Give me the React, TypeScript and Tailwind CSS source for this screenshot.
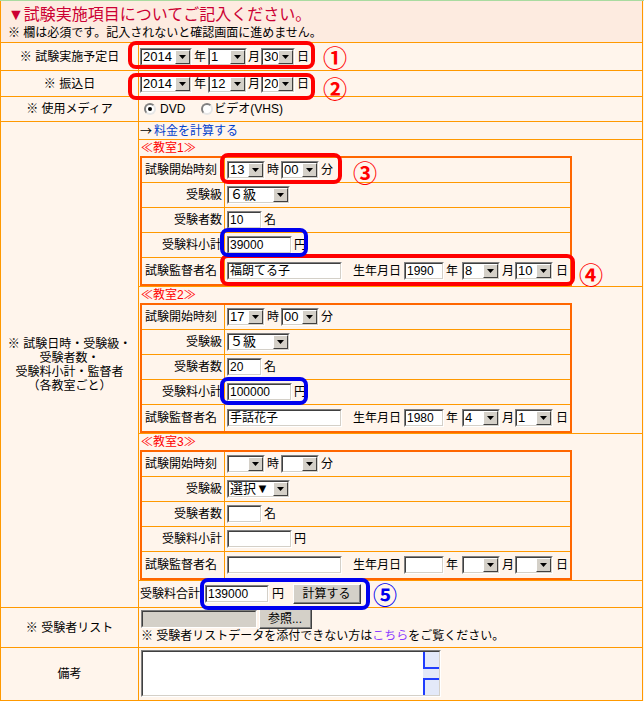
import type { ReactNode } from 'react';

type Room = {
  title: string;
  h: string;
  m: string;
  grade: string;
  num: string;
  fee: string;
  name: string;
  y: string;
  mo: string;
  d: string;
};

const ROOMS: Room[] = [
  { title: '≪教室1≫', h: '13', m: '00', grade: '６級', num: '10', fee: '39000', name: '福朗てる子', y: '1990', mo: '8', d: '10' },
  { title: '≪教室2≫', h: '17', m: '00', grade: '５級', num: '20', fee: '100000', name: '手話花子', y: '1980', mo: '4', d: '1' },
  { title: '≪教室3≫', h: '', m: '', grade: '選択▼', num: '', fee: '', name: '', y: '', mo: '', d: '' },
];

// classic win2k style select
function Sel({ w, v }: { w: string; v?: string }) {
  return (
    <span className={`flex h-[18px] shrink-0 border border-t-[#808080] border-l-[#808080] border-r-white border-b-white ${w}`}>
      <span className="flex min-w-0 flex-1 border border-t-[#404040] border-l-[#404040] border-r-[#d4d0c8] border-b-[#d4d0c8] bg-white">
        <span className="min-w-0 flex-1 overflow-hidden whitespace-nowrap pl-[1px] text-[13px] leading-[14px]">{v}</span>
        <span className="flex w-[15px] shrink-0 items-center justify-center border border-t-white border-l-white border-r-[#404040] border-b-[#404040] bg-[#d4d0c8]">
          <svg width="7" height="4" viewBox="0 0 7 4">
            <path d="M0 0h7L3.5 4z" fill="#000" />
          </svg>
        </span>
      </span>
    </span>
  );
}

function Inp({ w, v, gray }: { w: string; v?: string; gray?: boolean }) {
  return (
    <span className={`flex h-[18px] shrink-0 border border-t-[#808080] border-l-[#808080] border-r-white border-b-white ${w}`}>
      <span
        className={`flex min-w-0 flex-1 items-center overflow-hidden whitespace-nowrap border border-t-[#404040] border-l-[#404040] border-r-[#d4d0c8] border-b-[#d4d0c8] pl-[1px] text-[12px] leading-[14px] ${gray ? 'bg-[#d4d0c8]' : 'bg-white'}`}
      >
        {v}
      </span>
    </span>
  );
}

function Btn({ w, children }: { w: string; children: ReactNode }) {
  return (
    <span className={`flex h-[20px] shrink-0 border border-t-white border-l-white border-r-[#404040] border-b-[#404040] bg-[#d4d0c8] ${w}`}>
      <span className="flex flex-1 items-center justify-center border-r border-b border-[#808080] text-[12px]">{children}</span>
    </span>
  );
}

function Radio({ on }: { on?: boolean }) {
  return (
    <span className="flex h-[12px] w-[12px] shrink-0 items-center justify-center rounded-full border-2 border-t-[#808080] border-l-[#808080] border-r-[#e6e6e6] border-b-[#e6e6e6] bg-white">
      {on && <span className="h-[4px] w-[4px] rounded-full bg-black" />}
    </span>
  );
}

function Row({ h, label, children, right = 'items-center' }: { h: string; label: ReactNode; children: ReactNode; right?: string }) {
  return (
    <div className={`flex border-b border-[#ff9900] ${h}`}>
      <div className="flex w-[138px] shrink-0 items-center justify-center border-r border-[#ff9900] text-center">{label}</div>
      <div className={`flex min-w-0 flex-1 ${right}`}>{children}</div>
    </div>
  );
}

function RoomBlock({ r }: { r: Room }) {
  const row = 'flex h-[25px] border-b border-[#ff9900]';
  const lab = 'flex w-[83px] shrink-0 items-center justify-end whitespace-nowrap border-r border-[#ff9900] pr-[2px]';
  const labL = 'flex w-[83px] shrink-0 items-center whitespace-nowrap border-r border-[#ff9900] pl-[3px]';
  const val = 'flex flex-1 items-center pl-[2px]';
  return (
    <div className="h-[147px] border-b border-[#ff9900]">
      <div className="h-[16px] pl-[2px] leading-[16px] text-[#ff0000]">{r.title}</div>
      <div className="ml-[1px] w-[432px] border-2 border-[#ff6600]">
        <div className={row}>
          <div className={labL}>試験開始時刻</div>
          <div className={val}>
            <Sel w="w-[38px]" v={r.h} />
            <span className="ml-[2px]">時</span>
            <Sel w="ml-[2px] w-[38px]" v={r.m} />
            <span className="ml-[2px]">分</span>
          </div>
        </div>
        <div className={row}>
          <div className={lab}>受験級</div>
          <div className={val}>
            <Sel w="w-[63px]" v={r.grade} />
          </div>
        </div>
        <div className={row}>
          <div className={lab}>受験者数</div>
          <div className={val}>
            <Inp w="w-[35px]" v={r.num} />
            <span className="ml-[2px]">名</span>
          </div>
        </div>
        <div className={row}>
          <div className={lab}>受験料小計</div>
          <div className={val}>
            <Inp w="w-[65px]" v={r.fee} />
            <span className="ml-[2px]">円</span>
          </div>
        </div>
        <div className="flex h-[26px]">
          <div className={labL}>試験監督者名</div>
          <div className={val}>
            <Inp w="w-[115px]" v={r.name} />
            <span className="ml-[11px]">生年月日</span>
            <Inp w="ml-[3px] w-[40px]" v={r.y} />
            <span className="ml-[2px]">年</span>
            <Sel w="ml-[4px] w-[38px]" v={r.mo} />
            <span className="ml-[2px]">月</span>
            <Sel w="ml-[1px] w-[38px]" v={r.d} />
            <span className="ml-[3px]">日</span>
          </div>
        </div>
      </div>
    </div>
  );
}

export default function App() {
  return (
    <div className="relative w-[644px] bg-[#fff5ec] font-['Liberation_Sans','Noto_Sans_CJK_JP',sans-serif] text-[12px] leading-[14px] text-black">
      <div className="h-px bg-[#a9dba0]" />
      <div className="w-[643px] border-x border-[#ff9900]">
        {/* heading */}
        <div className="h-[42px] border-b border-[#ff9900] bg-[#fdebe0] pl-[7px] pt-[3px]">
          <div className="text-[16px] leading-[22px] text-[#cc0033]">▼試験実施項目についてご記入ください。</div>
          <div className="leading-[15px]">※ 欄は必須です。記入されないと確認画面に進めません。</div>
        </div>

        <Row h="h-[28px]" label="※ 試験実施予定日">
          <div className="flex items-center pl-[1px]">
            <Sel w="w-[52px]" v="2014" />
            <span className="ml-[2px]">年</span>
            <Sel w="ml-[2px] w-[39px]" v="1" />
            <span className="ml-[1px]">月</span>
            <Sel w="ml-[1px] w-[34px]" v="30" />
            <span className="ml-[2px]">日</span>
          </div>
        </Row>
        <Row h="h-[26px]" label="※ 振込日">
          <div className="flex items-center pl-[1px]">
            <Sel w="w-[52px]" v="2014" />
            <span className="ml-[2px]">年</span>
            <Sel w="ml-[2px] w-[39px]" v="12" />
            <span className="ml-[1px]">月</span>
            <Sel w="ml-[1px] w-[34px]" v="20" />
            <span className="ml-[2px]">日</span>
          </div>
        </Row>
        <Row h="h-[25px]" label="※ 使用メディア">
          <div className="flex items-center pl-[5px]">
            <Radio on />
            <span className="ml-[4px]">DVD</span>
            <span className="ml-[16px]">
              <Radio />
            </span>
            <span className="ml-[1px]">ビデオ(VHS)</span>
          </div>
        </Row>

        {/* per-room block */}
        <Row
          h="h-[486px]"
          right="flex-col"
          label={
            <div className="leading-[14px]">
              ※ 試験日時・受験級・
              <br />
              受験者数・
              <br />
              受験料小計・監督者
              <br />
              （各教室ごと）
            </div>
          }
        >
          <div className="flex h-[18px] items-center border-b border-[#ff9900] pl-[1px]">
            <span className="font-['Noto_Sans_CJK_JP',sans-serif]">→</span>
            <span className="ml-[2px] text-[#0040cc]">料金を計算する</span>
          </div>
          {ROOMS.map((r) => (
            <RoomBlock key={r.title} r={r} />
          ))}
          <div className="flex h-[26px] items-center pl-[1px]">
            <span>受験料合計</span>
            <Inp w="ml-[5px] w-[64px]" v="139000" />
            <span className="ml-[3px]">円</span>
            <Btn w="ml-[9px] w-[68px]">計算する</Btn>
          </div>
        </Row>

        <Row h="h-[40px]" label="※ 受験者リスト" right="flex-col pl-[2px] pt-[1px]">
          <div className="flex items-center">
            <Inp gray w="w-[116px]" />
            <Btn w="ml-[2px] w-[53px]">参照...</Btn>
          </div>
          <div className="whitespace-nowrap">
            ※ 受験者リストデータを添付できない方は<span className="text-[#8b3dff]">こちら</span>をご覧ください。
          </div>
        </Row>

        <Row h="h-[53px]" label="備考" right="items-start pl-[2px] pt-[2px]">
          <div className="flex h-[47px] w-[300px] border border-t-[#808080] border-l-[#808080] border-r-white border-b-white">
            <div className="flex flex-1 border border-t-[#404040] border-l-[#404040] border-r-[#d4d0c8] border-b-[#d4d0c8] bg-white">
              <div className="flex-1" />
              <div className="flex w-[16px] flex-col bg-[#e3e9f9]">
                <div className="h-[17px] border-b-2 border-l-2 border-[#1f3dff]" />
                <div className="flex-1" />
                <div className="h-[17px] border-t-2 border-l-2 border-[#1f3dff]" />
              </div>
            </div>
          </div>
        </Row>
      </div>

      {/* annotation overlays */}
      <div className="absolute left-[128px] top-[41px] h-[28px] w-[187px] rounded-[8px] border-4 border-[#ff0000]" />
      <div className="absolute left-[128px] top-[73px] h-[27px] w-[187px] rounded-[8px] border-4 border-[#ff0000]" />
      <div className="absolute left-[220px] top-[153px] h-[31px] w-[122px] rounded-[8px] border-4 border-[#ff0000]" />
      <div className="absolute left-[220px] top-[254px] h-[32px] w-[355px] rounded-[8px] border-4 border-[#ff0000]" />
      <div className="absolute left-[220px] top-[228px] h-[29px] w-[88px] rounded-[8px] border-4 border-[#0000ee]" />
      <div className="absolute left-[220px] top-[377px] h-[28px] w-[88px] rounded-[8px] border-4 border-[#0000ee]" />
      <div className="absolute left-[200px] top-[578px] h-[32px] w-[170px] rounded-[8px] border-4 border-[#0000ee]" />

      <span className="absolute left-[323px] top-[45px] font-['Noto_Sans_CJK_JP',sans-serif] text-[24px] font-bold leading-none text-[#ff0000]">①</span>
      <span className="absolute left-[323px] top-[76px] font-['Noto_Sans_CJK_JP',sans-serif] text-[24px] font-bold leading-none text-[#ff0000]">②</span>
      <span className="absolute left-[353px] top-[160px] font-['Noto_Sans_CJK_JP',sans-serif] text-[24px] font-bold leading-none text-[#ff0000]">③</span>
      <span className="absolute left-[579px] top-[262px] font-['Noto_Sans_CJK_JP',sans-serif] text-[24px] font-bold leading-none text-[#ff0000]">④</span>
      <span className="absolute left-[373px] top-[582px] font-['Noto_Sans_CJK_JP',sans-serif] text-[24px] font-bold leading-none text-[#0000ee]">⑤</span>
    </div>
  );
}
